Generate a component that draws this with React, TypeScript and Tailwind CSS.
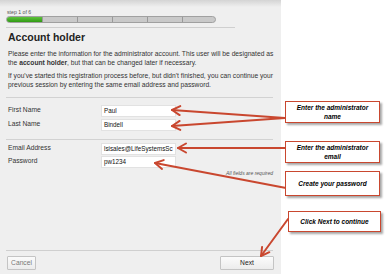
import React from "react";

const RED = "#c9472f";

function Arrow({ x1, y1, x2, y2 }: { x1: number; y1: number; x2: number; y2: number }) {
  const dx = x2 - x1;
  const dy = y2 - y1;
  const L = Math.hypot(dx, dy);
  const ux = dx / L;
  const uy = dy / L;
  const px = -uy;
  const py = ux;
  const h = 8;
  const w = 4.5;
  const pts = `${x2 - ux * h + px * w},${y2 - uy * h + py * w} ${x2},${y2} ${x2 - ux * h - px * w},${y2 - uy * h - py * w}`;
  return (
    <g>
      <line x1={x1} y1={y1} x2={x2} y2={y2} stroke={RED} strokeWidth={2} strokeLinecap="round" />
      <polyline points={pts} fill="none" stroke={RED} strokeWidth={2} strokeLinecap="round" strokeLinejoin="round" />
    </g>
  );
}

function Callout({ className, children }: { className: string; children: React.ReactNode }) {
  return (
    <div
      className={
        "absolute flex items-center justify-center text-center border-[1.5px] border-[#c9472f] bg-white text-[6.5px] leading-[9px] font-bold italic text-black shadow-[2px_2px_2px_rgba(0,0,0,0.35)] " +
        className
      }
    >
      {children}
    </div>
  );
}

function Field({ label, value }: { label: string; value: string }) {
  return (
    <div className="flex items-center h-[13px]">
      <div className="w-[95px] pl-[2px] text-[6.7px] text-[#333]">{label}</div>
      <div className="w-[75px] h-[12px] bg-white border border-[#e2e2e2] flex items-center pl-[2px] overflow-hidden whitespace-nowrap text-[6.3px] text-[#111]">
        {value}
      </div>
    </div>
  );
}

export default function App() {
  return (
    <div
      className="relative w-[386px] h-[274px] flex bg-white overflow-hidden"
      style={{ fontFamily: '"Liberation Sans", Arial, sans-serif' }}
    >
      <div className="w-[281px] h-full bg-[#efefef] flex flex-col">
        <div className="h-[7px] bg-gradient-to-b from-[#d4d4d4] to-[#efefef]" />
        <div className="px-[6px] flex flex-col">
          <div className="text-[5.2px] leading-[6px] text-[#555] mt-[2px] pl-[1px]">step 1 of 6</div>
          <div className="relative mt-[1px] w-[210px] h-[7px] rounded-full bg-[#c9c9c9] border border-[#a0a0a0] overflow-hidden flex">
            <div className="w-[35px] h-full bg-gradient-to-b from-[#5cc23a] to-[#2f9a12]" />
            <div className="w-[35px] h-full border-l border-[#999]" />
            <div className="w-[35px] h-full border-l border-[#999]" />
            <div className="w-[35px] h-full border-l border-[#999]" />
            <div className="w-[35px] h-full border-l border-[#999]" />
            <div className="flex-1 h-full border-l border-[#999]" />
          </div>
          <div className="mt-[4px] w-[229px] h-px bg-[#cfcfcf]" />
          <div className="mt-[3px] pl-[2px] text-[10.5px] leading-[12px] font-bold text-[#222]">Account holder</div>
          <div className="mt-[7px] pl-[2px] text-[6.7px] leading-[8.5px] text-[#333] w-[275px]">
            Please enter the information for the administrator account. This user will be designated as
            <br />
            the <span className="font-bold">account holder</span>, but that can be changed later if necessary.
          </div>
          <div className="mt-[5px] pl-[2px] text-[6.7px] leading-[8.5px] text-[#333] w-[275px]">
            If you've started this registration process before, but didn't finished, you can continue your
            <br />
            previous session by entering the same email address and password.
          </div>
          <div className="mt-[8px] w-[267px] h-px bg-[#d2d2d2]" />
          <div className="mt-[6px] flex flex-col gap-[1px]">
            <Field label="First Name" value="Paul" />
            <Field label="Last Name" value="Bindell" />
          </div>
          <div className="mt-[8px] w-[267px] h-px bg-[#d2d2d2]" />
          <div className="mt-[2px] flex flex-col gap-[0px]">
            <Field label="Email Address" value="lsisales@LifeSystemsSc" />
            <Field label="Password" value="pw1234" />
          </div>
          <div className="mt-[2px] w-[267px] text-right text-[5px] italic text-[#555]">All fields are required</div>
        </div>
        <div className="flex-1" />
        <div className="px-[6px] pb-[4px] flex flex-col">
          <div className="w-[267px] h-px bg-[#cfcfcf]" />
          <div className="mt-[5px] flex justify-between w-[268px]">
            <button className="ml-[1px] w-[29px] h-[14px] border border-[#c4c4c4] bg-gradient-to-b from-[#fbfbfb] to-[#ececec] text-[6.7px] text-[#777] rounded-[1px]">
              Cancel
            </button>
            <button className="w-[54px] h-[14px] border border-[#c4c4c4] bg-gradient-to-b from-[#fbfbfb] to-[#ececec] text-[6.7px] text-[#222] rounded-[1px]">
              Next
            </button>
          </div>
        </div>
      </div>
      <div className="flex-1" />

      <svg className="absolute inset-0 pointer-events-none" width={386} height={274}>
        <Arrow x1={285} y1={118} x2={172} y2={110} />
        <Arrow x1={285} y1={118} x2={172} y2={126} />
        <Arrow x1={286} y1={148} x2={178} y2={148} />
        <Arrow x1={286} y1={188} x2={155} y2={163} />
        <Arrow x1={288} y1={219} x2={261} y2={256} />
      </svg>

      <Callout className="left-[285px] top-[101px] w-[95px] h-[22px]">
        <div>
          Enter the administrator
          <br />
          name
        </div>
      </Callout>
      <Callout className="left-[285px] top-[141px] w-[95px] h-[22px]">
        <div>
          Enter the administrator
          <br />
          email
        </div>
      </Callout>
      <Callout className="left-[285px] top-[171px] w-[95px] h-[25px]">
        <div>Create your password</div>
      </Callout>
      <Callout className="left-[288px] top-[211px] w-[93px] h-[21px]">
        <div>Click Next to continue</div>
      </Callout>
    </div>
  );
}
